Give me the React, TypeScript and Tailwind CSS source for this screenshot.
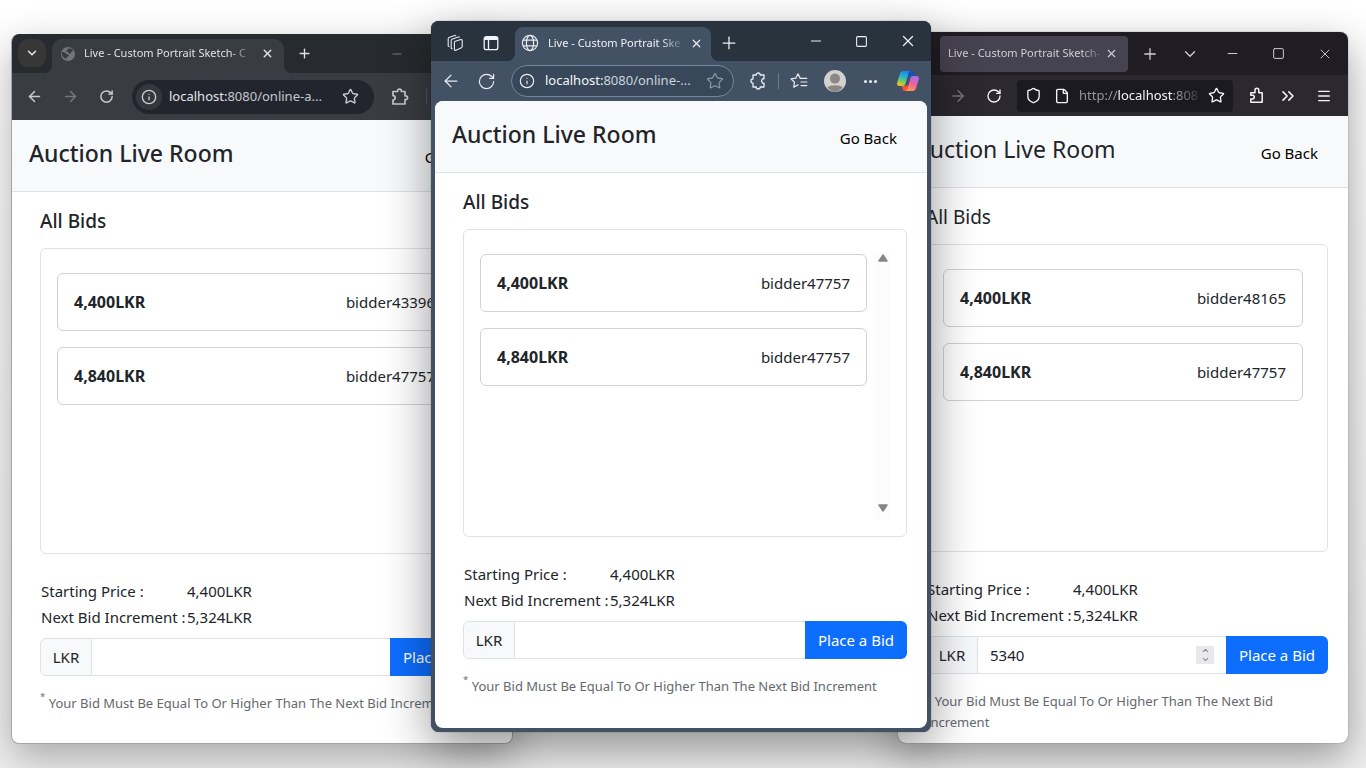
import { useId, useState } from "react";
import type { ReactNode } from "react";
import {
  ArrowLeft,
  ArrowRight,
  ChevronDown,
  ChevronsRight,
  ChevronUp,
  File,
  Info,
  Menu,
  Minus,
  Plus,
  RotateCw,
  Shield,
  Square,
  Star,
  X,
} from "lucide-react";

type Bid = { amount: string; bidder: string };

type AuctionProps = {
  bids: Bid[];
  titleWeight?: string;
  listHeight?: string;
  scrollbar?: boolean;
  initialBid?: string;
  spinner?: boolean;
};

const FADE = "[mask-image:linear-gradient(to_right,black_calc(100%-24px),transparent)]";

function IconButton({ label, className = "", children }: { label: string; className?: string; children: ReactNode }) {
  return (
    <button type="button" aria-label={label} className={`flex shrink-0 items-center justify-center ${className}`}>
      {children}
    </button>
  );
}

function GlobeSolid() {
  return (
    <svg viewBox="0 0 16 16" className="size-4 shrink-0" aria-hidden="true">
      <circle cx="8" cy="8" r="7" fill="#73767c" />
      <path
        d="M1.600 6.200c1.800-.4 3.400.2 4.300 1.300.6.900 1.900.5 2.600 1.100.9.800.2 1.900-.8 2.200-1 .3-.8 1.300-1.200 2-1.600-.300-3.400-1.800-4.200-3.400ZM8 2.400l3.800.3 1.400 2-1.800 1.400-.6 1.500-1.700-.2-.9-1.500-1.500-.2-.3-1.700 1.500-.3Z"
        fill="#3a3c43"
      />
    </svg>
  );
}

function GlobeOutline() {
  return (
    <svg viewBox="0 0 18 18" className="size-[18px] shrink-0" fill="none" stroke="#e4eaf1" strokeWidth="1.2" aria-hidden="true">
      <circle cx="9" cy="9" r="7.6" />
      <ellipse cx="9" cy="9" rx="3.6" ry="7.6" />
      <path d="M2 6.2h14M2 11.8h14" />
    </svg>
  );
}

function PuzzleRight({ className }: { className: string }) {
  return (
    <svg viewBox="0 0 20 20" className={className} fill="none" stroke="currentColor" strokeWidth="1.7" strokeLinejoin="round" aria-hidden="true">
      <path d="M3 4.5h4.6V4a1.9 1.9 0 0 1 3.8 0v.5H15v4.3h.6a1.9 1.9 0 0 1 0 3.8H15V17H3v-4a2.2 2.2 0 0 0 0-4.4Z" />
    </svg>
  );
}

function PuzzleUp({ className }: { className: string }) {
  return (
    <svg viewBox="0 0 20 20" className={className} fill="none" stroke="currentColor" strokeWidth="1.6" strokeLinejoin="round" aria-hidden="true">
      <path d="M4 17.2h12V7.2h-3.6V4.4a2 2 0 0 0-4 0v2.8H4v2.6h1.8a1.9 1.9 0 0 1 0 3.8H4Z" />
    </svg>
  );
}

function PuzzleThin({ className }: { className: string }) {
  return (
    <svg viewBox="0 0 20 20" className={className} fill="none" stroke="currentColor" strokeWidth="1.3" strokeLinejoin="round" aria-hidden="true">
      <path d="M5 4h3.200a2 2 0 0 1 4 0H16v3.800a1.400 1.400 0 0 0-1.800.6 2.100 2.100 0 0 0 0 3 1.400 1.400 0 0 0 1.800.8V16h-3.800a2 2 0 0 1-4 0H5v-3.800a2.100 2.100 0 1 1 0-4.200Z" />
    </svg>
  );
}

function WorkspacesIcon() {
  return (
    <svg viewBox="0 0 18 18" className="size-[18px]" fill="none" stroke="#e4eaf1" strokeWidth="1.1" strokeLinejoin="round" strokeLinecap="round" aria-hidden="true">
      <path d="m8.600 7.600 6.200-2c.8-.2 1.400.2 1.400 1v6c0 .6-.3 1-.8 1.200l-5.400 2.400c-.9.4-1.600 0-1.600-1V8.400" />
      <path d="M5.200 14.200V6.400c0-.6.3-1 .8-1.200l6.200-2.300c.5-.2.9 0 1.100.3M2.200 12V4.600c0-.6.3-1 .8-1.200l5.600-2c.5-.2.9 0 1.100.3M2.200 12l.8.600M5.200 14.200l.8.600" />
    </svg>
  );
}

function VerticalTabsIcon() {
  return (
    <svg viewBox="0 0 16 16" className="size-4" fill="none" stroke="#f1f5f9" strokeWidth="1.3" aria-hidden="true">
      <rect x="1.2" y="1.6" width="13.6" height="13" rx="2.2" />
      <path d="M1.5 3.5h13" strokeWidth="3" />
      <path d="M5.5 5v9.5" />
    </svg>
  );
}

function FavoritesIcon() {
  return (
    <svg viewBox="0 0 20 20" className="size-5" fill="none" stroke="#e8edf3" strokeWidth="1.2" strokeLinejoin="round" strokeLinecap="round" aria-hidden="true">
      <path d="M11.2 7.2 9 2.8 6.8 7.2l-4.8.7 3.5 3.4-.8 4.9L9 13.9M11.2 7.4h6.6M12 11h5.8M12 14.6h5.8" />
    </svg>
  );
}

function AvatarIcon() {
  return (
    <svg viewBox="0 0 22 22" className="size-[22px]" aria-hidden="true">
      <circle cx="11" cy="11" r="11" fill="#d3d1ce" />
      <circle cx="11" cy="8.600" r="5" fill="#8b8784" />
      <path d="M3.500 17.600c1.600-3 13.400-3 15 0A11 11 0 0 1 11 22a11 11 0 0 1-7.500-4.400Z" fill="#8b8784" />
    </svg>
  );
}

function CopilotIcon() {
  return (
    <svg viewBox="0 0 24 24" className="size-6" aria-hidden="true">
      <defs>
        <linearGradient id="copilot-left" x1="0.6" y1="0" x2="0.3" y2="1">
          <stop offset="0" stopColor="#1a84ee" />
          <stop offset="0.4" stopColor="#25b7d0" />
          <stop offset="0.7" stopColor="#7bcb58" />
          <stop offset="1" stopColor="#f2c11c" />
        </linearGradient>
        <linearGradient id="copilot-right" x1="0.6" y1="0" x2="0.3" y2="1">
          <stop offset="0" stopColor="#a86df0" />
          <stop offset="0.5" stopColor="#ef5f9d" />
          <stop offset="1" stopColor="#ff9a4d" />
        </linearGradient>
      </defs>
      <path d="M12 2h3.3c1.2 0 1.7.8 2 1.8L18.4 7h-3.600c-1.500 0-2.300.8-2.700 2Z" fill="#1452c4" />
      <path d="M12 22H8.700c-1.200 0-1.700-.8-2-1.800L5.600 17h3.600c1.500 0 2.300-.8 2.700-2Z" fill="#f0553a" />
      <path d="M7.500 2h7c-1.200.3-1.700 1.200-2 2.200L9.600 14.500c-.5 1.700-1.300 2.500-2.900 2.500H3.600C1.400 17 .6 15.600 1.200 13.600L4 4.800C4.600 3 5.700 2 7.500 2Z" fill="url(#copilot-left)" />
      <path d="M16.500 22h-7c1.200-.3 1.700-1.200 2-2.200l2.900-10.300c.5-1.700 1.300-2.500 2.900-2.500h3.100c2.200 0 3 1.400 2.400 3.400L20 19.200c-.6 1.800-1.700 2.800-3.500 2.800Z" fill="url(#copilot-right)" />
    </svg>
  );
}

function AuctionRoom({
  bids,
  titleWeight = "font-medium",
  listHeight = "h-[308px]",
  scrollbar = false,
  initialBid = "",
  spinner = false,
}: AuctionProps) {
  const [value, setValue] = useState(initialBid);
  const inputId = useId();
  const step = (n: number) => setValue((v) => String(Number(v) + n));

  return (
    <main className="text-[15px] text-[#212529]">
      <header className="flex items-start justify-between border-b border-[#dee2e6] bg-[#f8f9fb] pt-[18px] pr-[30px] pb-[15px] pl-[17px]">
        <h1 className={`text-[23px] leading-[30px] whitespace-nowrap ${titleWeight}`}>Auction Live Room</h1>
        <a href="#back" className="leading-[38px] whitespace-nowrap text-black">Go Back</a>
      </header>
      <div className="pt-4 pr-5 pl-7">
        <h2 className={`mb-[14px] text-[19px] leading-[26px] ${titleWeight}`}>All Bids</h2>
        <section aria-label="All bids" className={`flex gap-2 rounded-md border border-[#dee2e6] px-4 pt-6 pb-4 ${listHeight}`}>
          <ul className={`flex flex-1 flex-col gap-4 ${scrollbar ? "" : "pr-2"}`}>
            {bids.map((bid) => (
              <li key={bid.amount} className="flex h-[58px] items-center justify-between rounded-md border border-[#cfd3d6] px-4">
                <strong className="text-base font-bold">{bid.amount}</strong>
                <span>{bid.bidder}</span>
              </li>
            ))}
          </ul>
          {scrollbar && (
            <div className="flex w-[15px] flex-col items-center justify-between bg-[#fcfcfc] pb-2" aria-hidden="true">
              <svg viewBox="0 0 10 8" className="h-2 w-[10px]"><path d="M5 1 9 7H1Z" fill="#858585" stroke="#858585" strokeWidth="1.5" strokeLinejoin="round" /></svg>
              <svg viewBox="0 0 10 8" className="h-2 w-[10px]"><path d="M5 7 9 1H1Z" fill="#858585" stroke="#858585" strokeWidth="1.5" strokeLinejoin="round" /></svg>
            </div>
          )}
        </section>
        <table className="mt-6 ml-px leading-[26px]">
          <tbody>
            <tr>
              <th scope="row" className="w-[146px] text-left font-normal whitespace-nowrap">Starting Price :</th>
              <td>4,400LKR</td>
            </tr>
            <tr>
              <th scope="row" className="text-left font-normal whitespace-nowrap">Next Bid Increment :</th>
              <td>5,324LKR</td>
            </tr>
          </tbody>
        </table>
        <form className="mt-2 flex h-[38px]" onSubmit={(e) => e.preventDefault()}>
          <label htmlFor={inputId} className="flex w-[52px] shrink-0 items-center justify-center rounded-l-md border border-[#dee2e6] bg-[#f8f9fa]">
            LKR
          </label>
          <div className="flex min-w-0 flex-1 items-center border-y border-[#dee2e6] px-3">
            <input
              id={inputId}
              type="number"
              value={value}
              onChange={(e) => setValue(e.target.value)}
              className="w-full min-w-0 [appearance:textfield] outline-none [&::-webkit-inner-spin-button]:appearance-none"
            />
            {spinner && (
              <span className="flex h-[18px] w-[18px] shrink-0 flex-col items-center justify-center bg-[#e9e9ed] text-[#8a8a90]">
                <button type="button" aria-label="Increase" onClick={() => step(1)}><ChevronUp size={9} strokeWidth={3} /></button>
                <button type="button" aria-label="Decrease" onClick={() => step(-1)}><ChevronDown size={9} strokeWidth={3} /></button>
              </span>
            )}
          </div>
          <button type="submit" className="w-[102px] shrink-0 rounded-r-md bg-[#0d6efd] whitespace-nowrap text-white">Place a Bid</button>
        </form>
        <p className="mt-[17px] text-[13px] leading-[21px] text-[#65696d]">
          <sup className="-top-2">*</sup> Your Bid Must Be Equal To Or Higher Than The Next Bid Increment
        </p>
      </div>
    </main>
  );
}

function ChromeWindow() {
  return (
    <section aria-label="Chrome window" className="absolute top-[34px] left-[11px] flex h-[710px] w-[502px] flex-col overflow-hidden rounded-lg border border-t-0 border-[#a3a6a8] bg-white shadow-[0_14px_40px_rgba(0,0,0,0.3)]">
      <div className="flex h-[39px] shrink-0 bg-[#272a2e] pl-[6px] text-[#dfe1e5]">
        <IconButton label="Search tabs" className="mt-[5px] mr-[6px] size-7 rounded-[10px] bg-[#373738]">
          <ChevronDown size={14} strokeWidth={2.6} />
        </IconButton>
        <div className="relative mt-[5px] flex w-[232px] items-center rounded-t-[10px] bg-[#3a3c43] pr-2 pb-[5px] pl-2 before:absolute before:bottom-0 before:-left-2 before:size-2 before:bg-[radial-gradient(circle_at_0_0,transparent_8px,#3a3c43_8px)] after:absolute after:-right-2 after:bottom-0 after:size-2 after:bg-[radial-gradient(circle_at_100%_0,transparent_8px,#3a3c43_8px)]">
          <GlobeSolid />
          <span className={`ml-2 w-[170px] overflow-hidden text-[11px] whitespace-nowrap ${FADE}`}>Live - Custom Portrait Sketch- C</span>
          <IconButton label="Close tab" className="ml-[7px]"><X size={13} strokeWidth={2.6} /></IconButton>
        </div>
        <IconButton label="New tab" className="ml-3 w-4"><Plus size={15} strokeWidth={2.2} /></IconButton>
        <IconButton label="Minimize" className="ml-[77px] w-4 text-[#85878a]"><Minus size={14} strokeWidth={1.5} /></IconButton>
      </div>
      <div className="flex h-[47px] shrink-0 items-center bg-[#3a3c43] pl-3 text-[#c6c9d0]">
        <IconButton label="Back" className="w-5"><ArrowLeft size={17} strokeWidth={2.2} /></IconButton>
        <IconButton label="Forward" className="ml-4 w-5 text-[#73767d]"><ArrowRight size={17} strokeWidth={2.2} /></IconButton>
        <IconButton label="Reload" className="ml-4 w-5"><RotateCw size={15} strokeWidth={2.4} /></IconButton>
        <div className="ml-4 flex h-[34px] w-[242px] items-center rounded-full bg-[#22252d] px-1">
          <IconButton label="Site information" className="size-[26px] rounded-full bg-[#35373f]"><Info size={16} strokeWidth={2.1} /></IconButton>
          <div role="textbox" aria-label="Address" className="ml-[7px] flex-1 text-[13px] whitespace-nowrap text-[#c4c7ce]">
            <span className="text-[#e3e5ea]">localhost:</span>8080/online-a...
          </div>
          <IconButton label="Bookmark" className="mr-[11px]"><Star size={17} strokeWidth={2} /></IconButton>
        </div>
        <IconButton label="Extensions" className="ml-4"><PuzzleRight className="size-5" /></IconButton>
        <div className="ml-4 h-4 w-px bg-[#565960]" />
      </div>
      <AuctionRoom
        scrollbar
        listHeight="h-[306px]"
        bids={[
          { amount: "4,400LKR", bidder: "bidder43396" },
          { amount: "4,840LKR", bidder: "bidder47757" },
        ]}
      />
    </section>
  );
}

function FirefoxWindow() {
  return (
    <section aria-label="Firefox window" className="absolute top-[32px] left-[898px] flex h-[711px] w-[450px] flex-col overflow-hidden rounded-lg bg-white shadow-[0_0_1px_rgba(0,0,0,0.7),0_14px_40px_rgba(0,0,0,0.38)]">
      <div className="flex h-[43px] shrink-0 items-center bg-[#1f1c23] pl-[42px] text-[#d0cfd4]">
        <div className="flex h-9 w-[188px] items-center rounded bg-[#464350] px-2">
          <span className={`w-[157px] overflow-hidden text-[11px] whitespace-nowrap ${FADE}`}>Live - Custom Portrait Sketch-</span>
          <IconButton label="Close tab"><X size={13} strokeWidth={2} /></IconButton>
        </div>
        <IconButton label="New tab" className="ml-[13px]"><Plus size={18} strokeWidth={1.7} /></IconButton>
        <IconButton label="List all tabs" className="ml-[22px]"><ChevronDown size={18} strokeWidth={1.7} /></IconButton>
        <IconButton label="Minimize" className="ml-[26px]"><Minus size={15} strokeWidth={1.6} /></IconButton>
        <IconButton label="Maximize" className="ml-8"><Square size={13} strokeWidth={1.8} /></IconButton>
        <IconButton label="Close" className="ml-8"><X size={16} strokeWidth={1.4} /></IconButton>
      </div>
      <div className="flex h-[41px] shrink-0 items-center bg-[#2b2830] pl-[51px] text-[#f4f4f6]">
        <IconButton label="Forward" className="text-[#77747c]"><ArrowRight size={18} strokeWidth={1.8} /></IconButton>
        <IconButton label="Reload" className="ml-[19px]"><RotateCw size={16} strokeWidth={2} /></IconButton>
        <div className="ml-[15px] flex h-8 w-[216px] items-center rounded bg-[#1c1a21] px-2">
          <Shield size={17} strokeWidth={1.9} className="shrink-0" />
          <File size={16} strokeWidth={2.1} className="ml-3 shrink-0" />
          <div role="textbox" aria-label="Address" className={`mr-[5px] ml-[9px] flex-1 overflow-hidden text-[13px] whitespace-nowrap text-[#96949c] ${FADE}`}>
            http://<span className="text-[#f4f4f6]">localhost</span>:808
          </div>
          <IconButton label="Bookmark"><Star size={17} strokeWidth={1.9} /></IconButton>
        </div>
        <IconButton label="Extensions" className="ml-[14px]"><PuzzleUp className="size-[19px]" /></IconButton>
        <IconButton label="More tools" className="ml-3"><ChevronsRight size={20} strokeWidth={1.9} /></IconButton>
        <IconButton label="Menu" className="ml-[18px]"><Menu size={16} strokeWidth={1.9} /></IconButton>
      </div>
      <AuctionRoom
        titleWeight="font-normal"
        initialBid="5340"
        spinner
        bids={[
          { amount: "4,400LKR", bidder: "bidder48165" },
          { amount: "4,840LKR", bidder: "bidder47757" },
        ]}
      />
    </section>
  );
}

function EdgeWindow() {
  return (
    <section aria-label="Edge window" className="absolute top-[21px] left-[431px] flex h-[711px] w-[500px] flex-col overflow-hidden rounded-lg bg-[#435165] shadow-[0_0_1px_rgba(0,0,0,0.7),0_16px_48px_rgba(0,0,0,0.42)]">
      <div className="flex h-10 shrink-0 bg-[#28333e] pr-[14px] pl-[15px] text-[#eef2f6]">
        <IconButton label="Workspaces" className="pt-1"><WorkspacesIcon /></IconButton>
        <IconButton label="Tab actions" className="ml-[19px] pt-1"><VerticalTabsIcon /></IconButton>
        <div className="relative mt-[6px] ml-4 flex w-[196px] items-center rounded-t-lg bg-[#435165] pr-2 pb-[2px] pl-[6px] before:absolute before:bottom-0 before:-left-2 before:size-2 before:bg-[radial-gradient(circle_at_0_0,transparent_8px,#435165_8px)] after:absolute after:-right-2 after:bottom-0 after:size-2 after:bg-[radial-gradient(circle_at_100%_0,transparent_8px,#435165_8px)]">
          <GlobeOutline />
          <span className={`ml-[9px] w-[137px] overflow-hidden text-[11px] whitespace-nowrap ${FADE}`}>Live - Custom Portrait Ske</span>
          <IconButton label="Close tab" className="ml-[5px]"><X size={13} strokeWidth={2.2} /></IconButton>
        </div>
        <IconButton label="New tab" className="ml-2 pt-1"><Plus size={20} strokeWidth={1.5} /></IconButton>
        <div className="flex flex-1 items-center justify-end gap-[31px]">
          <IconButton label="Minimize"><Minus size={16} strokeWidth={1.5} /></IconButton>
          <IconButton label="Maximize"><Square size={13} strokeWidth={2} /></IconButton>
          <IconButton label="Close"><X size={18} strokeWidth={1.7} /></IconButton>
        </div>
      </div>
      <div className="flex h-10 shrink-0 items-center pl-[10px] text-[#e8edf3]">
        <IconButton label="Back"><ArrowLeft size={20} strokeWidth={1.5} /></IconButton>
        <IconButton label="Reload" className="ml-4"><RotateCw size={19} strokeWidth={1.5} /></IconButton>
        <div className="ml-[15px] flex h-8 w-[223px] items-center rounded-full border border-[#75869a] bg-[#38475a] px-[7px]">
          <Info size={16} strokeWidth={1.8} className="shrink-0" />
          <div role="textbox" aria-label="Address" className="ml-[10px] flex-1 text-[13px] whitespace-nowrap text-[#ccd4de]">
            <span className="text-[#f4f7fa]">localhost:</span>8080/online-...
          </div>
          <IconButton label="Bookmark" className="mr-[2px] text-[#8b99a9]"><Star size={18} strokeWidth={1.6} /></IconButton>
        </div>
        <IconButton label="Extensions" className="ml-[14px]"><PuzzleThin className="size-5" /></IconButton>
        <div className="ml-[10px] h-4 w-px bg-[#6d7c8f]" />
        <IconButton label="Favorites" className="ml-[10px]"><FavoritesIcon /></IconButton>
        <IconButton label="Profile" className="ml-[15px]"><AvatarIcon /></IconButton>
        <IconButton label="Settings and more" className="ml-[18px] gap-[2px]">
          <i className="size-[3px] rounded-full bg-current" />
          <i className="size-[3px] rounded-full bg-current" />
          <i className="size-[3px] rounded-full bg-current" />
        </IconButton>
        <IconButton label="Copilot" className="ml-[19px]"><CopilotIcon /></IconButton>
      </div>
      <div className="mx-1 mb-1 flex-1 overflow-hidden rounded-lg bg-white">
        <AuctionRoom
          scrollbar
          bids={[
            { amount: "4,400LKR", bidder: "bidder47757" },
            { amount: "4,840LKR", bidder: "bidder47757" },
          ]}
        />
      </div>
    </section>
  );
}

export default function App() {
  return (
    <div className="relative h-screen overflow-hidden bg-linear-to-b from-white to-[#f0f0f0] font-['Noto_Sans','Open_Sans',sans-serif]">
      <ChromeWindow />
      <FirefoxWindow />
      <EdgeWindow />
    </div>
  );
}
